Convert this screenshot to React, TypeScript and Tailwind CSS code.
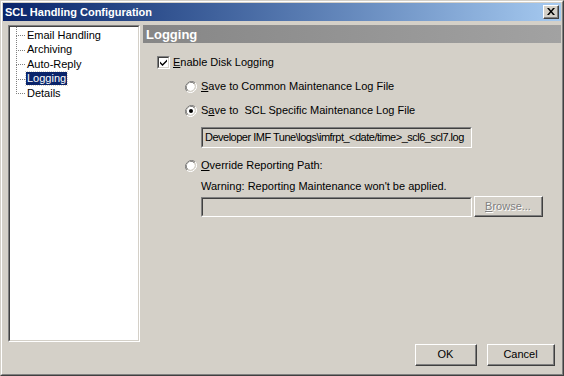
import React from "react";

const font = { fontFamily: '"Liberation Sans", Arial, sans-serif' };

function Radio({ checked }: { checked?: boolean }) {
  return (
    <svg width="12" height="12" viewBox="0 0 12 12" className="shrink-0">
      <path d="M10.2 1.8 A6 6 0 0 0 1.8 10.2" fill="none" stroke="#808080" strokeWidth="1" />
      <path d="M9.4 2.6 A4.9 4.9 0 0 0 2.6 9.4" fill="none" stroke="#404040" strokeWidth="1" />
      <circle cx="6" cy="6" r="4.3" fill="#ffffff" />
      <path d="M1.8 10.2 A6 6 0 0 0 10.2 1.8" fill="none" stroke="#ffffff" strokeWidth="1" />
      <path d="M2.6 9.4 A4.9 4.9 0 0 0 9.4 2.6" fill="none" stroke="#d4d0c8" strokeWidth="1" />
      {checked && <circle cx="6" cy="6" r="2" fill="#000" />}
    </svg>
  );
}

function Checkbox() {
  return (
    <div className="w-[13px] h-[13px] shrink-0 border-t border-l border-t-[#808080] border-l-[#808080] border-b border-r border-b-white border-r-white">
      <div className="w-full h-full border-t border-l border-t-[#404040] border-l-[#404040] border-b border-r border-b-[#d4d0c8] border-r-[#d4d0c8] bg-white flex items-center justify-center">
        <svg width="7" height="7" viewBox="0 0 7 7">
          <path d="M0 2.5 L2.5 5 L7 0.5 L7 2.5 L2.5 7 L0 4.5 Z" fill="#000" />
        </svg>
      </div>
    </div>
  );
}

function Sunken({ children, className = "" }: { children?: React.ReactNode; className?: string }) {
  return (
    <div className={"border-t border-l border-t-[#808080] border-l-[#808080] border-b border-r border-b-white border-r-white " + className}>
      <div className="w-full h-full border-t border-l border-t-[#404040] border-l-[#404040] border-b border-r border-b-[#d4d0c8] border-r-[#d4d0c8] flex items-center overflow-hidden">
        {children}
      </div>
    </div>
  );
}

function Button({ children, className = "" }: { children: React.ReactNode; className?: string }) {
  return (
    <div className={"border-t border-l border-t-white border-l-white border-b border-r border-b-[#404040] border-r-[#404040] " + className}>
      <div className="w-full h-full border-b border-r border-b-[#808080] border-r-[#808080] flex items-center justify-center">
        {children}
      </div>
    </div>
  );
}

function TreeItem({ label, selected, last }: { label: string; selected?: boolean; last?: boolean }) {
  return (
    <div className="relative h-[14.5px] flex items-center">
      <div className="absolute left-[6px] top-1/2 w-[9px] border-t border-dotted border-[#808080]" />
      <div
        className={
          "absolute left-[6px] border-l border-dotted border-[#808080] " +
          (last ? "top-[-7px] h-[14.5px]" : "top-[-7px] h-[15px]")
        }
      />
      <span
        className={
          "ml-[16px] px-[1px] leading-[13px] " +
          (selected ? "bg-[#0a246a] text-white outline outline-1 outline-dotted outline-[#d4d0c8]" : "text-black")
        }
      >
        {label}
      </span>
    </div>
  );
}

export default function App() {
  return (
    <div style={font} className="w-[564px] h-[376px] bg-[#d4d0c8] text-[11px] text-black border-t border-l border-t-[#d4d0c8] border-l-[#d4d0c8] border-b border-r border-b-[#404040] border-r-[#404040] overflow-hidden">
      <div className="w-full h-full border-t border-l border-t-white border-l-white border-b border-r border-b-[#808080] border-r-[#808080] flex flex-col p-px">
        {/* Title bar */}
        <div className="h-[18px] shrink-0 flex items-center justify-between bg-gradient-to-r from-[#0a246a] to-[#a6caf0] pl-[2px] pr-[2px]">
          <span className="text-white font-bold text-[11px] leading-none">SCL Handling Configuration</span>
          <Button className="w-[16px] h-[14px] bg-[#d4d0c8]">
            <svg width="8" height="7" viewBox="0 0 8 7">
              <path d="M0 0 H2 L4 2.5 L6 0 H8 L5 3.5 L8 7 H6 L4 4.5 L2 7 H0 L3 3.5 Z" fill="#000" />
            </svg>
          </Button>
        </div>

        {/* Body */}
        <div className="flex flex-1 flex-col pt-[4px]">
          <div className="flex gap-[3px] pl-[5px] h-[317px]">
            {/* Tree panel */}
            <Sunken className="w-[132px] h-full bg-white">
              <div className="w-full h-full bg-white pt-[1px] self-start">
                <TreeItem label="Email Handling" />
                <TreeItem label="Archiving" />
                <TreeItem label="Auto-Reply" />
                <TreeItem label="Logging" selected />
                <TreeItem label="Details" last />
              </div>
            </Sunken>

            {/* Content */}
            <div className="flex-1 flex flex-col">
              <div className="h-[18px] bg-gradient-to-r from-[#868686] to-[#a2a2a2] flex items-center pl-[3px]">
                <span className="text-white font-bold text-[13px] leading-none">Logging</span>
              </div>

              <div className="flex items-center gap-[3px] pl-[14px] mt-[13px] h-[13px]">
                <Checkbox />
                <span><span className="underline">E</span>nable Disk Logging</span>
              </div>

              <div className="pl-[42px]">
                <div className="flex items-center gap-[4px] mt-[11px] h-[13px]">
                  <Radio />
                  <span><span className="underline">S</span>ave to Common Maintenance Log File</span>
                </div>
                <div className="flex items-center gap-[4px] mt-[11px] h-[13px]">
                  <Radio checked />
                  <span>S<span className="underline">a</span>ve to&nbsp; SCL Specific Maintenance Log File</span>
                </div>

                <Sunken className="ml-[16px] mt-[10px] w-[271px] h-[21px] bg-[#d4d0c8]">
                  <span className="pl-[2px] whitespace-nowrap tracking-[-0.5px]">Developer IMF Tune\logs\imfrpt_&lt;date/time&gt;_scl6_scl7.log</span>
                </Sunken>

                <div className="flex items-center gap-[4px] mt-[11px] h-[13px]">
                  <Radio />
                  <span><span className="underline">O</span>verride Reporting Path:</span>
                </div>

                <div className="ml-[16px] mt-[8px] h-[13px] leading-[13px]">
                  Warning: Reporting Maintenance won't be applied.
                </div>

                <div className="ml-[16px] mt-[3px] flex items-center gap-[2px]">
                  <Sunken className="w-[271px] h-[20px] bg-[#d4d0c8]" />
                  <Button className="w-[69px] h-[21px] bg-[#d4d0c8]">
                    <span className="text-[#808080] [text-shadow:1px_1px_0_#ffffff]">
                      <span className="underline">B</span>rowse...
                    </span>
                  </Button>
                </div>
              </div>
            </div>
          </div>

          {/* Buttons */}
          <div className="flex justify-end gap-[10px] pr-[6px] mt-[2px]">
            <Button className="w-[62px] h-[22px]">OK</Button>
            <Button className="w-[68px] h-[22px]">Cancel</Button>
          </div>
        </div>
      </div>
    </div>
  );
}
